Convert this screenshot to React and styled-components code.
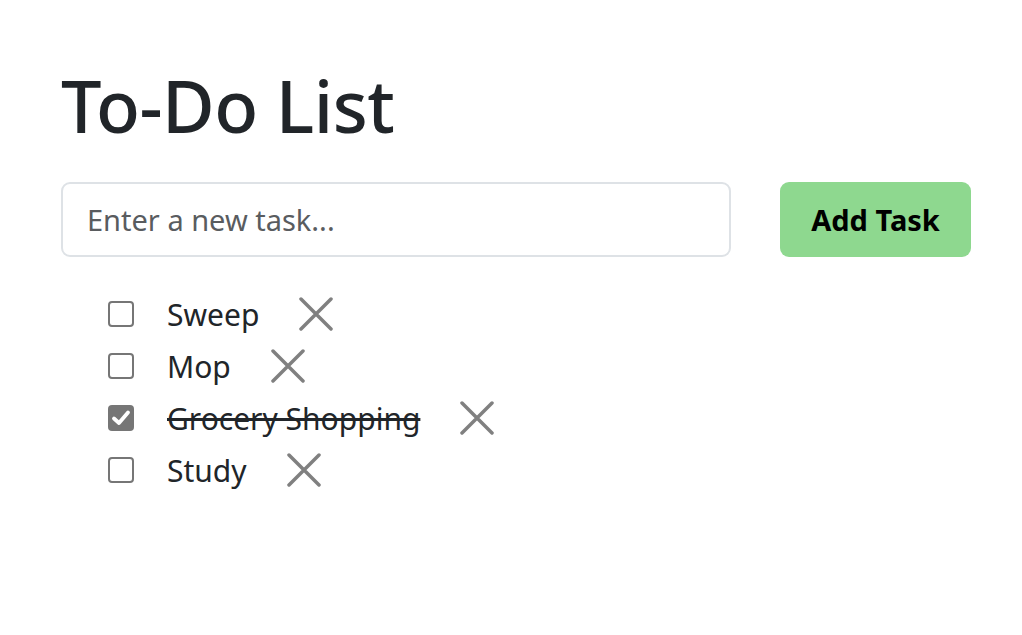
import React, { useState } from "react";
import styled, { createGlobalStyle } from "styled-components";

const Global = createGlobalStyle`
  html, body { margin: 0; padding: 0; background: #fff; }
  body { font-family: "Noto Sans", "Open Sans", sans-serif; color: #212529; }
  * { box-sizing: border-box; }
`;

const Page = styled.div`
  padding: 62px 51px 40px 61px;
`;

const Title = styled.h1`
  margin: 0 0 34px 0;
  font-size: 72px;
  line-height: 1.2;
  font-weight: 500;
  color: #212529;
  letter-spacing: -0.5px;
`;

const Form = styled.div`
  display: flex;
  align-items: stretch;
  gap: 49px;
  margin-bottom: 31px;
`;

const Input = styled.input`
  flex: 1;
  height: 75px;
  border: 2px solid #dee2e6;
  border-radius: 9px;
  padding: 0 24px;
  font-family: inherit;
  font-size: 29px;
  color: #212529;
  outline: none;
  &::placeholder { color: #595c5f; }
`;

const Button = styled.button`
  width: 191px;
  height: 75px;
  border: none;
  border-radius: 9px;
  background: #8ed88f;
  font-family: inherit;
  font-size: 29px;
  font-weight: 700;
  color: #000;
`;

const List = styled.ul`
  list-style: none;
  margin: 0;
  padding: 0 0 0 47px;
  display: flex;
  flex-direction: column;
`;

const Item = styled.li`
  display: flex;
  align-items: center;
  height: 52px;
`;

const Box = styled.span`
  width: 26px;
  height: 26px;
  border-radius: 4px;
  border: ${(p) => (p.$checked ? "none" : "2px solid #767676")};
  background: ${(p) => (p.$checked ? "#767676" : "#fff")};
  display: inline-flex;
  align-items: center;
  justify-content: center;
  flex: none;
  margin-right: 33px;
`;

const Label = styled.span`
  font-size: 30px;
  color: #212529;
  text-decoration: ${(p) => (p.$done ? "line-through" : "none")};
  text-decoration-thickness: 3px;
  margin-right: 40px;
`;

const Remove = styled.button`
  background: none;
  border: none;
  padding: 0;
  width: 34px;
  height: 34px;
  display: inline-flex;
  align-items: center;
  justify-content: center;
`;

const tasks = [
  { text: "Sweep", done: false },
  { text: "Mop", done: false },
  { text: "Grocery Shopping", done: true },
  { text: "Study", done: false },
];

export default function App() {
  const [items] = useState(tasks);
  return (
    <Page>
      <Global />
      <Title>To-Do List</Title>
      <Form>
        <Input placeholder="Enter a new task..." />
        <Button>Add Task</Button>
      </Form>
      <List>
        {items.map((t) => (
          <Item key={t.text}>
            <Box $checked={t.done}>
              {t.done && (
                <svg width="22" height="22" viewBox="0 0 22 22">
                  <path d="M4 11.5 L9 16 L18 5.5" fill="none" stroke="#fff" strokeWidth="3.8" strokeLinecap="round" strokeLinejoin="round" />
                </svg>
              )}
            </Box>
            <Label $done={t.done}>{t.text}</Label>
            <Remove>
              <svg width="34" height="34" viewBox="0 0 34 34">
                <path d="M2 2 L32 32 M32 2 L2 32" stroke="#808080" strokeWidth="3.5" strokeLinecap="round" />
              </svg>
            </Remove>
          </Item>
        ))}
      </List>
    </Page>
  );
}
